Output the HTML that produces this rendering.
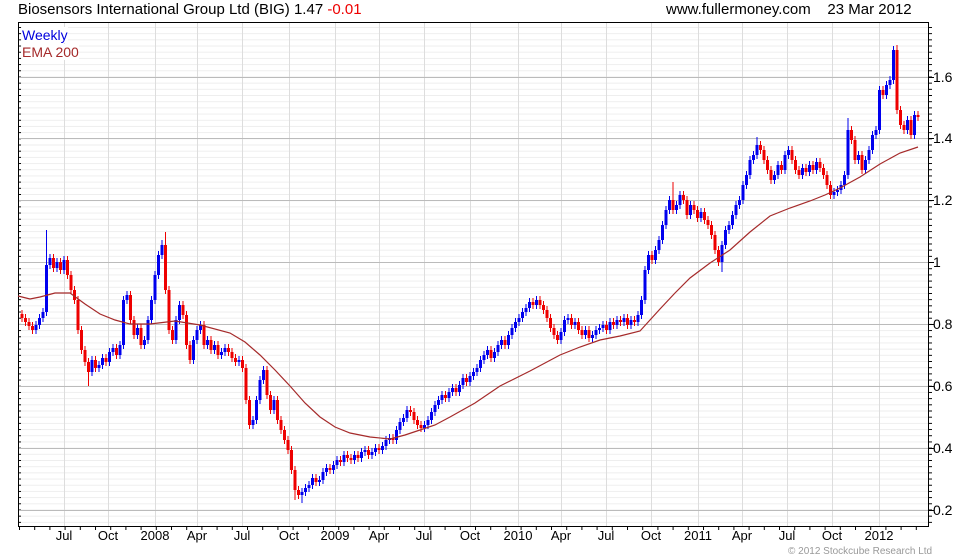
<!DOCTYPE html>
<html><head><meta charset="utf-8"><style>
body{margin:0;background:#fff;width:980px;height:560px;overflow:hidden;font-family:"Liberation Sans",sans-serif}
.t{position:absolute;white-space:nowrap}
</style></head><body>
<svg width="980" height="560" style="position:absolute;left:0;top:0" font-family="Liberation Sans, sans-serif">
<defs>
<pattern id="mg" patternUnits="userSpaceOnUse" x="0" y="509.5" width="980" height="6.186"><line x1="0" x2="980" y1="0.5" y2="0.5" stroke="#eee"/></pattern>
<pattern id="tk" patternUnits="userSpaceOnUse" x="0" y="509.5" width="980" height="6.186"><line x1="0" x2="980" y1="0.5" y2="0.5" stroke="#000"/></pattern>
<pattern id="bt" patternUnits="userSpaceOnUse" x="19" y="0" width="15.2" height="10"><line x1="0.5" x2="0.5" y1="0" y2="10" stroke="#000"/></pattern>
</defs>
<rect x="18" y="22" width="910" height="504" fill="url(#mg)"/>
<rect x="18" y="22" width="3" height="504" fill="url(#tk)"/>
<rect x="928" y="22" width="4" height="504" fill="url(#tk)"/>
<rect x="18" y="526" width="910" height="4" fill="url(#bt)"/>
<g stroke="#ddd">
<line x1="64.5" x2="64.5" y1="22" y2="526"/><line x1="108.5" x2="108.5" y1="22" y2="526"/><line x1="155.5" x2="155.5" y1="22" y2="526"/><line x1="197.5" x2="197.5" y1="22" y2="526"/><line x1="242.5" x2="242.5" y1="22" y2="526"/><line x1="289.5" x2="289.5" y1="22" y2="526"/><line x1="335.5" x2="335.5" y1="22" y2="526"/><line x1="379.5" x2="379.5" y1="22" y2="526"/><line x1="424.5" x2="424.5" y1="22" y2="526"/><line x1="470.5" x2="470.5" y1="22" y2="526"/><line x1="518.5" x2="518.5" y1="22" y2="526"/><line x1="561.5" x2="561.5" y1="22" y2="526"/><line x1="606.5" x2="606.5" y1="22" y2="526"/><line x1="651.5" x2="651.5" y1="22" y2="526"/><line x1="698.5" x2="698.5" y1="22" y2="526"/><line x1="742.5" x2="742.5" y1="22" y2="526"/><line x1="787.5" x2="787.5" y1="22" y2="526"/><line x1="832.5" x2="832.5" y1="22" y2="526"/><line x1="879.5" x2="879.5" y1="22" y2="526"/>
</g>
<g stroke="#bbb">
<line x1="18" x2="928" y1="510.5" y2="510.5"/><line x1="18" x2="928" y1="448.5" y2="448.5"/><line x1="18" x2="928" y1="386.5" y2="386.5"/><line x1="18" x2="928" y1="324.5" y2="324.5"/><line x1="18" x2="928" y1="262.5" y2="262.5"/><line x1="18" x2="928" y1="200.5" y2="200.5"/><line x1="18" x2="928" y1="138.5" y2="138.5"/><line x1="18" x2="928" y1="77.5" y2="77.5"/>
</g>
<g stroke="#000">
<line x1="928" x2="934" y1="510.5" y2="510.5"/><line x1="928" x2="934" y1="448.5" y2="448.5"/><line x1="928" x2="934" y1="386.5" y2="386.5"/><line x1="928" x2="934" y1="324.5" y2="324.5"/><line x1="928" x2="934" y1="262.5" y2="262.5"/><line x1="928" x2="934" y1="200.5" y2="200.5"/><line x1="928" x2="934" y1="138.5" y2="138.5"/><line x1="928" x2="934" y1="77.5" y2="77.5"/>
</g>
<rect x="18.5" y="22.5" width="910" height="504" fill="none" stroke="#000"/>
<g font-size="14" fill="#000">
<text x="933" y="515">0.2</text><text x="933" y="453">0.4</text><text x="933" y="391">0.6</text><text x="933" y="329">0.8</text><text x="933" y="267">1</text><text x="933" y="205">1.2</text><text x="933" y="143">1.4</text><text x="933" y="82">1.6</text>
</g>
<g font-size="13" fill="#000" text-anchor="middle">
<text x="64" y="540">Jul</text><text x="108" y="540">Oct</text><text x="155" y="540">2008</text><text x="197" y="540">Apr</text><text x="242" y="540">Jul</text><text x="289" y="540">Oct</text><text x="335" y="540">2009</text><text x="379" y="540">Apr</text><text x="424" y="540">Jul</text><text x="470" y="540">Oct</text><text x="518" y="540">2010</text><text x="561" y="540">Apr</text><text x="606" y="540">Jul</text><text x="651" y="540">Oct</text><text x="698" y="540">2011</text><text x="742" y="540">Apr</text><text x="787" y="540">Jul</text><text x="832" y="540">Oct</text><text x="879" y="540">2012</text>
</g>
<path fill="none" stroke="#0000ee" stroke-width="1" d="M36 321V334 M39.5 314V329 M43 308V322 M46.5 230V316 M50 254V269 M57 258V272 M64 256V274 M92 356V376 M99 361V372 M102.5 354V369 M109.5 348V366 M113 344V356 M120 341V359 M123.5 296V349 M127 291V304 M137.5 324V339 M144.5 336V349 M148 316V344 M151.5 296V324 M155 271V304 M158.5 251V279 M162 240V259 M176 316V344 M179.5 301V324 M193.5 336V364 M197 326V344 M200.5 321V334 M207.5 336V349 M214.5 341V354 M221.5 348V359 M225 344V356 M239 356V366 M253 416V429 M256.5 396V424 M260 376V404 M263.5 366V384 M274 396V414 M302 488V503 M305.5 484V496 M309 481V492 M312.5 474V489 M319.5 476V486 M323 468V484 M326.5 464V476 M333.5 461V474 M337 456V469 M344 451V466 M354.5 451V464 M361.5 448V462 M365 446V456 M372 448V459 M375.5 444V456 M382.5 442V454 M386 436V450 M389.5 434V444 M396.5 426V444 M400 418V434 M403.5 414V426 M407 406V422 M424.5 421V432 M428 416V429 M431.5 408V424 M435 401V416 M438.5 396V409 M442 391V404 M449 388V402 M452.5 384V396 M459.5 381V396 M463 374V389 M470 372V386 M473.5 368V380 M477 364V376 M480.5 356V372 M484 351V364 M487.5 346V359 M494.5 348V362 M498 341V356 M501.5 336V349 M508.5 331V349 M512 324V339 M515.5 318V332 M519 314V326 M522.5 308V322 M526 304V316 M529.5 298V312 M536.5 296V309 M561 328V344 M564.5 316V336 M568 314V324 M575 318V329 M585.5 326V339 M592.5 331V342 M596 326V339 M599.5 324V334 M603 321V332 M610 318V334 M617 316V329 M624 314V326 M631 316V329 M638 311V326 M641.5 296V319 M645 266V304 M648.5 251V274 M655.5 246V264 M659 236V254 M662.5 221V244 M666 206V229 M669.5 196V214 M676.5 201V214 M680 191V209 M690.5 201V219 M701 208V222 M722 241V272 M725.5 226V249 M729 221V234 M732.5 211V229 M736 201V219 M739.5 196V209 M743 181V204 M746.5 171V189 M750 156V179 M753.5 151V164 M757 137V159 M774.5 171V184 M778 161V179 M785 151V174 M788.5 146V159 M802.5 164V179 M809.5 161V176 M816.5 158V174 M834 188V199 M837.5 186V196 M841 181V194 M844.5 171V189 M848 118V179 M858.5 151V164 M865.5 156V174 M869 146V164 M872.5 131V154 M876 126V139 M879.5 86V134 M886.5 81V99 M890 76V89 M893.5 46V84 M907.5 116V134 M914.5 111V139"/>
<path fill="none" stroke="#ee0000" stroke-width="1" d="M22 310V322 M25.5 314V326 M29 318V330 M32.5 322V334 M53.5 254V272 M60.5 258V274 M67.5 256V279 M71 271V294 M74.5 286V304 M78 296V334 M81.5 326V354 M85 346V366 M88.5 358V386 M95.5 356V372 M106 354V366 M116.5 344V359 M130.5 291V324 M134 316V339 M141 324V349 M165.5 232V294 M169 286V334 M172.5 326V344 M183 301V319 M186.5 311V349 M190 341V364 M204 321V349 M211 336V354 M218 341V359 M228.5 344V356 M232 348V362 M235.5 354V366 M242.5 356V372 M246 364V404 M249.5 396V429 M267 366V399 M270.5 391V414 M277.5 396V424 M281 416V434 M284.5 426V444 M288 436V454 M291.5 446V474 M295 466V500 M298.5 486V499 M316 474V486 M330 464V474 M340.5 456V466 M347.5 451V462 M351 454V464 M358 451V462 M368.5 446V459 M379 444V454 M393 434V444 M410.5 406V416 M414 408V424 M417.5 416V429 M421 421V432 M445.5 391V402 M456 384V396 M466.5 374V386 M491 346V362 M505 336V349 M533 298V309 M540 296V309 M543.5 301V314 M547 306V322 M550.5 314V332 M554 324V339 M557.5 331V344 M571.5 314V329 M578.5 318V334 M582 326V339 M589 326V342 M606.5 321V334 M613.5 318V329 M620.5 316V326 M627.5 314V329 M634.5 316V326 M652 251V264 M673 182V214 M683.5 191V204 M687 196V219 M694 201V214 M697.5 206V222 M704.5 208V224 M708 216V229 M711.5 221V239 M715 231V254 M718.5 246V266 M760.5 141V154 M764 146V164 M767.5 156V174 M771 166V184 M781.5 161V174 M792 146V164 M795.5 156V174 M799 166V179 M806 164V176 M813 161V174 M820 158V172 M823.5 164V179 M827 171V189 M830.5 181V199 M851.5 126V144 M855 136V164 M862 151V174 M883 86V99 M897 45V114 M900.5 106V129 M904 121V134 M911 116V139 M918 111V121"/>
<path fill="none" stroke="#0000ee" stroke-width="3" d="M36 325V330 M39.5 318V325 M43 312V318 M46.5 265V312 M50 258V265 M57 262V268 M64 260V270 M92 360V372 M99 365V368 M102.5 358V365 M109.5 352V362 M113 348V352 M120 345V355 M123.5 300V345 M127 295V300 M137.5 328V335 M144.5 340V345 M148 320V340 M151.5 300V320 M155 275V300 M158.5 255V275 M162 245V255 M176 320V340 M179.5 305V320 M193.5 340V360 M197 330V340 M200.5 325V330 M207.5 340V345 M214.5 345V350 M221.5 352V355 M225 348V352 M239 360V362 M253 420V425 M256.5 400V420 M260 380V400 M263.5 370V380 M274 400V410 M302 492V495 M305.5 488V492 M309 485V488 M312.5 478V485 M319.5 480V482 M323 472V480 M326.5 468V472 M333.5 465V470 M337 460V465 M344 455V462 M354.5 455V460 M361.5 452V458 M365 450V452 M372 452V455 M375.5 448V452 M382.5 446V450 M386 440V446 M389.5 438V440 M396.5 430V440 M400 422V430 M403.5 418V422 M407 410V418 M424.5 425V428 M428 420V425 M431.5 412V420 M435 405V412 M438.5 400V405 M442 395V400 M449 392V398 M452.5 388V392 M459.5 385V392 M463 378V385 M470 376V382 M473.5 372V376 M477 368V372 M480.5 360V368 M484 355V360 M487.5 350V355 M494.5 352V358 M498 345V352 M501.5 340V345 M508.5 335V345 M512 328V335 M515.5 322V328 M519 318V322 M522.5 312V318 M526 308V312 M529.5 302V308 M536.5 300V305 M561 332V340 M564.5 320V332 M568 318V320 M575 322V325 M585.5 330V335 M592.5 335V338 M596 330V335 M599.5 328V330 M603 325V328 M610 322V330 M617 320V325 M624 318V322 M631 320V325 M638 315V322 M641.5 300V315 M645 270V300 M648.5 255V270 M655.5 250V260 M659 240V250 M662.5 225V240 M666 210V225 M669.5 200V210 M676.5 205V210 M680 195V205 M690.5 205V215 M701 212V218 M722 245V262 M725.5 230V245 M729 225V230 M732.5 215V225 M736 205V215 M739.5 200V205 M743 185V200 M746.5 175V185 M750 160V175 M753.5 155V160 M757 145V155 M774.5 175V180 M778 165V175 M785 155V170 M788.5 150V155 M802.5 168V175 M809.5 165V172 M816.5 162V170 M834 192V195 M837.5 190V192 M841 185V190 M844.5 175V185 M848 130V175 M858.5 155V160 M865.5 160V170 M869 150V160 M872.5 135V150 M876 130V135 M879.5 90V130 M886.5 85V95 M890 80V85 M893.5 50V80 M907.5 120V130 M914.5 115V135"/>
<path fill="none" stroke="#ee0000" stroke-width="3" d="M22 314V318 M25.5 318V322 M29 322V326 M32.5 326V330 M53.5 258V268 M60.5 262V270 M67.5 260V275 M71 275V290 M74.5 290V300 M78 300V330 M81.5 330V350 M85 350V362 M88.5 362V372 M95.5 360V368 M106 358V362 M116.5 348V355 M130.5 295V320 M134 320V335 M141 328V345 M165.5 245V290 M169 290V330 M172.5 330V340 M183 305V315 M186.5 315V345 M190 345V360 M204 325V345 M211 340V350 M218 345V355 M228.5 348V352 M232 352V358 M235.5 358V362 M242.5 360V368 M246 368V400 M249.5 400V425 M267 370V395 M270.5 395V410 M277.5 400V420 M281 420V430 M284.5 430V440 M288 440V450 M291.5 450V470 M295 470V490 M298.5 490V495 M316 478V482 M330 468V470 M340.5 460V462 M347.5 455V458 M351 458V460 M358 455V458 M368.5 450V455 M379 448V450 M393 438V440 M410.5 410V412 M414 412V420 M417.5 420V425 M421 425V428 M445.5 395V398 M456 388V392 M466.5 378V382 M491 350V358 M505 340V345 M533 302V305 M540 300V305 M543.5 305V310 M547 310V318 M550.5 318V328 M554 328V335 M557.5 335V340 M571.5 318V325 M578.5 322V330 M582 330V335 M589 330V338 M606.5 325V330 M613.5 322V325 M620.5 320V322 M627.5 318V325 M634.5 320V322 M652 255V260 M673 200V210 M683.5 195V200 M687 200V215 M694 205V210 M697.5 210V218 M704.5 212V220 M708 220V225 M711.5 225V235 M715 235V250 M718.5 250V262 M760.5 145V150 M764 150V160 M767.5 160V170 M771 170V180 M781.5 165V170 M792 150V160 M795.5 160V170 M799 170V175 M806 168V172 M813 165V170 M820 162V168 M823.5 168V175 M827 175V185 M830.5 185V195 M851.5 130V140 M855 140V160 M862 155V170 M883 90V95 M897 50V110 M900.5 110V125 M904 125V130 M911 120V135 M918 115V117"/>
<polyline fill="none" stroke="#a52a2a" stroke-width="1.2" points="18,296 30,299 40,297 55,293 70,293 85,304 100,314 115,320 130,324 150,324 175,321 200,325 230,333 245,342 260,355 275,370 290,386 305,403 320,417 335,427 350,433 370,437 390,439 405,435 420,430 435,425 450,417 475,403 500,386 530,371 560,355 580,347 600,340 620,336 640,331 650,320 660,309 675,293 690,278 710,263 730,250 750,232 770,216 790,208 810,201 825,195 840,188 860,177 880,164 900,153 918,147"/>
</svg>
<div class="t" style="left:18px;top:1px;font-size:15px;color:#000">Biosensors International Group Ltd (BIG) 1.47 <span style="color:#e00">-0.01</span></div>
<div class="t" style="left:666px;top:1px;font-size:15px;color:#000">www.fullermoney.com&nbsp;&nbsp;&nbsp;&nbsp;23 Mar 2012</div>
<div class="t" style="left:22px;top:27px;font-size:14px;color:#0000dd;background:#fff">Weekly</div>
<div class="t" style="left:22px;top:44px;font-size:14px;color:#a52a2a;background:#fff">EMA 200</div>
<div class="t" style="left:788px;top:546px;font-size:10px;color:#999">© 2012 Stockcube Research Ltd</div>
</body></html>
